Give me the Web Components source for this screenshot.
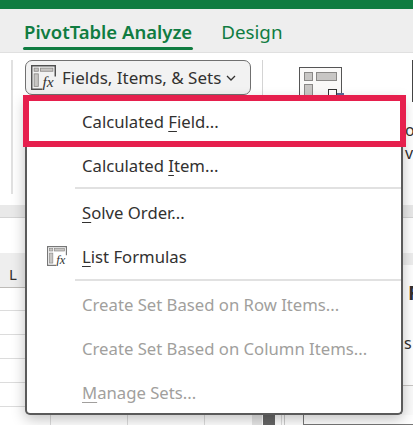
<!DOCTYPE html>
<html>
<head>
<meta charset="utf-8">
<style>
  html, body { margin: 0; height: 100%; background: #fff; overflow: hidden; }
  body { font-family: "Noto Sans", "Open Sans", sans-serif; position: relative; width: 413px; height: 425px; }
</style>
</head>
<body>
<x-titlebar></x-titlebar>
<x-tabs>
  <x-tab active>PivotTable Analyze</x-tab>
  <x-tab>Design</x-tab>
</x-tabs>
<x-ribbon></x-ribbon>
<x-sheet></x-sheet>

<x-menu>
  <x-menu-item>Calculated <u>F</u>ield...</x-menu-item>
  <x-menu-item>Calculated <u>I</u>tem...</x-menu-item>
  <x-menu-sep></x-menu-sep>
  <x-menu-item><u>S</u>olve Order...</x-menu-item>
  <x-menu-item icon><u>L</u>ist Formulas</x-menu-item>
  <x-menu-sep></x-menu-sep>
  <x-menu-item disabled>Create Set Based on Row Items...</x-menu-item>
  <x-menu-item disabled>Create Set Based on Column Items...</x-menu-item>
  <x-menu-item disabled><u>M</u>anage Sets...</x-menu-item>
</x-menu>
<x-highlight></x-highlight>

<script>
function define(name, html, setup) {
  customElements.define(name, class extends HTMLElement {
    constructor() {
      super();
      this.attachShadow({ mode: 'open' });
      this.shadowRoot.innerHTML = html;
    }
    connectedCallback() {
      if (setup) setup(this);
    }
  });
}

const fxIcon = (size, stroke) => `
  <svg width="${size}" height="${size}" viewBox="0 0 24 24" style="display:block;flex:none">
    <path d="M11 23.3H.7V.7H23.3V11" fill="none" stroke="${stroke}" stroke-width="1.4"/>
    <rect x="3" y="3" width="4" height="3" fill="#c8c6c4" stroke="#8a8886" stroke-width=".8"/>
    <rect x="9" y="3" width="12" height="3" fill="#c8c6c4" stroke="#8a8886" stroke-width=".8"/>
    <rect x="3" y="8.5" width="4" height="12" fill="#c8c6c4" stroke="#8a8886" stroke-width=".8"/>
    <text x="11" y="21.5" font-family="Liberation Serif, serif" font-style="italic" font-size="15" fill="#333">fx</text>
  </svg>`;

define('x-titlebar', `<style>:host{display:block;height:9px;background:#107c41}</style>`);

define('x-tabs', `
  <style>
    :host { display:flex; gap:29px; height:44px; box-sizing:border-box; padding:0 0 0 24px;
            background:#eee; border-bottom:1px solid #e0e0e0; }
  </style><slot></slot>`);

define('x-tab', `
  <style>
    :host { display:block; position:relative; font-size:18.8px; line-height:46px; color:#107c41; height:43px; white-space:nowrap; }
    :host([active]) { font-size:18.5px; font-weight:600; }
    :host([active])::after { content:""; display:block; height:3px; background:#107c41; border-radius:2px; margin:-8px -1px 0; }
  </style><slot></slot>`);

define('x-ribbon', `
  <style>
    :host { display:flex; height:151px; box-sizing:border-box; background:#fff; padding-top:7px; }
    .sep { width:2px; height:134px; margin-left:11px; background:#e1e1e1; }
    .btn { display:flex; align-items:center; gap:6px; box-sizing:border-box; width:226px; height:35px; margin-left:12px;
           padding-left:5px; border:1.5px solid #707070; border-radius:7px; background:#f2f2f2; font-size:17px; color:#323130; white-space:nowrap; }
    .sep2 { width:1px; height:36px; margin-left:11px; background:#d4d4d4; }
    .pivot { position:relative; box-sizing:border-box; width:43px; height:50px; margin:7px 0 0 36px; border:1px solid #555; background:#faf9f8; }
    .pivot i { position:absolute; background:#c8c6c4; border:1px solid #8a8886; box-sizing:border-box; }
    .edge { width:1px; height:42px; margin-left:70px; background:#444; }
    .cut { position:absolute; left:405px; font-size:16px; color:#323130; }
  </style>
  <div class="sep"></div>
  <div class="btn">${fxIcon(25, '#505050')}<span>Fields, Items, &amp; Sets</span>
    <svg width="10" height="6" viewBox="0 0 10 6" style="margin-left:-1px"><path d="M1 1l4 4 4-4" fill="none" stroke="#323130" stroke-width="1.3"/></svg>
  </div>
  <div class="sep2"></div>
  <div class="pivot">
    <i style="left:4px;top:4px;width:9px;height:9px"></i>
    <i style="left:16px;top:4px;width:21px;height:9px"></i>
    <i style="left:4px;top:16px;width:9px;height:24px"></i>
    <i style="left:28px;top:21px;width:9px;height:12px;background:#fff;border-color:#333"></i>
    <i style="left:37px;top:25px;width:7px;height:6px;background:#5a6b9a;border:0"></i>
  </div>
  <div class="edge"></div>
  <span class="cut" style="top:119px">o</span>
  <span class="cut" style="top:142px">v</span>`);

define('x-sheet', `
  <style>
    :host { display:flex; height:221px; background:#fff; position:relative; overflow:hidden; }
    .pane { display:flex; flex-direction:column; }
    .left { width:303px; }
    .right { flex:1; }
    .band { height:12px; margin-top:1px; background:#e9e9e9; border-bottom:1px solid #d4d4d4; }
    .gap { height:35px; }
    .head { height:34px; background:#eee; border-bottom:1px solid #bdbbb8; font-size:15px; color:#323130; line-height:43px; padding-left:9px; }
    .rows { flex:1; background:
      repeating-linear-gradient(90deg, #dcdcdc 0 1px, transparent 1px 77px) 50px 0 / 100% 100%,
      repeating-linear-gradient(#fff 0 23px, #dcdcdc 23px 24px) 0 -1px; }
    .rhead { height:12px; background:#eee; }
    .rtext { height:120px; position:relative; border-bottom:1px solid #c8c6c4; font-size:16px; color:#323130; }
    .rtext span { position:absolute; }
    .rrest { flex:1; background:#fbfbfb; display:flex; flex-direction:column; justify-content:flex-end; }
    .box { height:9px; border-left:1.5px solid #777; border-bottom:1.5px solid #777; background:#fff; }
    .stub { position:absolute; top:211px; bottom:0; }
  </style>
  <div class="pane left">
    <div class="band"></div>
    <div class="gap"></div>
    <div class="head">L</div>
    <div class="rows"></div>
  </div>
  <div class="pane right">
    <div class="band"></div>
    <div class="gap"></div>
    <div class="rhead"></div>
    <div class="rtext">
      <span style="left:105px;top:14px;font-weight:700;font-size:20px">F</span>
      <span style="left:101px;top:67px">s</span>
    </div>
    <div class="rrest"><div class="box"></div></div>
  </div>
  <div class="stub" style="left:252px;width:10px;background:#e6e6e6"></div>
  <div class="stub" style="left:263px;width:12px;background:#666"></div>
  <div class="stub" style="left:284px;width:1px;background:#ccc"></div>`);

define('x-menu', `
  <style>
    :host { position:absolute; left:25px; top:97px; width:378px; height:318px; box-sizing:border-box; display:block; padding-top:2px;
            background:#fff; border:2px solid #5a5a5a; border-top:0; border-radius:0 0 5px 5px;
            box-shadow:0 4px 14px rgba(0,0,0,.25); }
  </style><slot></slot>`);

define('x-menu-item', `
  <style>
    :host { display:flex; align-items:center; height:44px; padding-left:55px; font-size:16.7px; color:#323130; position:relative; white-space:nowrap; }
    :host([disabled]) { color:#a19f9d; }
    .i { position:absolute; left:20px; top:12px; }
    ::slotted(u) { text-underline-offset:3px; text-decoration-thickness:1px; }
  </style><div class="i"></div><span><slot></slot></span>`,
  el => {
    if (el.hasAttribute('icon')) el.shadowRoot.querySelector('.i').innerHTML = fxIcon(20, '#777');
  });

define('x-menu-sep', `
  <style>
    :host { display:block; height:2px; margin:0 0 1px 48px; background:#e1e1e1; }
  </style>`, el => {
    // the second separator sits one pixel lower than the run of items would put it
    if (el.previousElementSibling.hasAttribute('icon')) el.style.marginTop = '1px';
  });

define('x-highlight', `
  <style>
    :host { position:absolute; left:23px; top:95px; width:383px; height:52px; box-sizing:border-box; border:6px solid #e61f4d; display:block; }
  </style>`);
</script>
</body>
</html>
